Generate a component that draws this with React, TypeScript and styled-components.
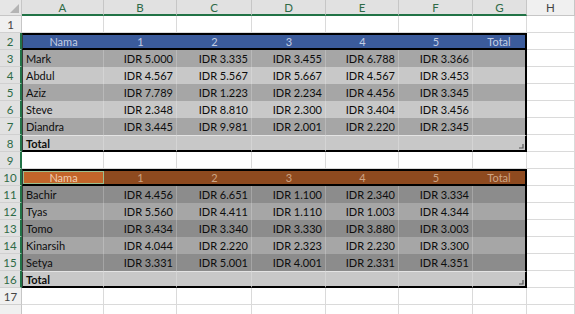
import React from 'react';
import styled, { createGlobalStyle, css } from 'styled-components';

const GlobalStyle = createGlobalStyle`
  html, body {
    margin: 0;
    padding: 0;
    background: #ffffff;
    overflow: hidden;
  }
  body {
    font-family: Lato, "Open Sans", "Liberation Sans", sans-serif;
  }
`;

const COLS = ['A', 'B', 'C', 'D', 'E', 'F', 'G', 'H'];
const ROW_COUNT = 18;
const LAST_LABELLED = 17;

const Sheet = styled.div`
  width: 575px;
  height: 314px;
  overflow: hidden;
  display: grid;
  grid-template-columns: 22px 82px 73px 75px 74px 73px 74px 54px 1fr;
  grid-template-rows: 16px repeat(${ROW_COUNT}, 17px);
  font-size: 11px;
  color: #0d0d0d;
`;

const Corner = styled.div`
  position: relative;
  background: #e6e6e6;
  border-right: 1px solid #c6c6c6;
  border-bottom: 1px solid #c6c6c6;
  box-sizing: border-box;
  &::after {
    content: '';
    position: absolute;
    right: 2px;
    bottom: 2px;
    border-left: 9px solid transparent;
    border-bottom: 9px solid #b4b4b4;
  }
`;

const ColHeader = styled.div<{ $selected?: boolean }>`
  box-sizing: border-box;
  display: flex;
  align-items: center;
  justify-content: center;
  background: ${p => (p.$selected ? '#e1e1e1' : '#f0f0f0')};
  color: ${p => (p.$selected ? '#2d6a46' : '#444')};
  border-right: 1px solid #c6c6c6;
  border-bottom: ${p => (p.$selected ? '2px solid #217346' : '1px solid #c6c6c6')};
  font-size: 11.5px;
`;

const RowHeader = styled.div<{ $selected?: boolean }>`
  box-sizing: border-box;
  display: flex;
  align-items: center;
  justify-content: center;
  background: ${p => (p.$selected ? '#e1e1e1' : '#f0f0f0')};
  color: ${p => (p.$selected ? '#2d6a46' : '#444')};
  border-bottom: 1px solid #d0d0d0;
  border-right: ${p => (p.$selected ? '2px solid #217346' : '1px solid #c6c6c6')};
  font-size: 11.5px;
`;

const Blank = styled.div`
  box-sizing: border-box;
  border-right: 1px solid #dadada;
  border-bottom: 1px solid #dadada;
`;

type Kind = 'head' | 'dark' | 'light' | 'total';
type Tone = 'blue' | 'brown';

const palette = {
  blue: { head: '#3b5b9b', headText: '#c4cee3', dark: '#a6a6a6', light: '#c8c8c8', total: '#c8c8c8' },
  brown: { head: '#8e4a1f', headText: '#cfa585', dark: '#8c8c8c', light: '#a6a6a6', total: '#c8c8c8' },
};

const TableCell = styled.div<{
  $kind: Kind;
  $tone: Tone;
  $align: 'left' | 'center' | 'right';
  $first?: boolean;
  $last?: boolean;
  $active?: boolean;
}>`
  position: relative;
  box-sizing: border-box;
  display: flex;
  align-items: center;
  padding: 0 3px;
  white-space: nowrap;
  overflow: hidden;
  justify-content: ${p => (p.$align === 'left' ? 'flex-start' : p.$align === 'right' ? 'flex-end' : 'center')};
  background: ${p => palette[p.$tone][p.$kind]};
  border-right: ${p => (p.$last ? '2px solid #000' : p.$kind === 'head' ? 'none' : '1px solid rgba(255,255,255,0.22)')};
  border-left: ${p => (p.$first ? '1px solid #3a3a3a' : 'none')};
  ${p =>
    p.$kind === 'head' &&
    css`
      color: ${palette[p.$tone].headText};
      border-top: 2px solid #000;
      border-bottom: 2px solid #000;
    `}
  ${p =>
    p.$kind === 'total' &&
    css`
      font-weight: 700;
      border-top: 1px solid #e4e4e4;
      border-bottom: 2px solid #000;
    `}
  ${p =>
    p.$active &&
    css`
      background: #c2652a;
      color: #f1cdb2;
      box-shadow: inset 0 0 0 1px #9bbf8e;
    `}
`;

const ResizeMark = styled.svg`
  position: absolute;
  right: 1px;
  bottom: 1px;
`;

const header = ['Nama', '1', '2', '3', '4', '5', 'Total'];

const table1 = [
  ['Mark', 'IDR 5.000', 'IDR 3.335', 'IDR 3.455', 'IDR 6.788', 'IDR 3.366'],
  ['Abdul', 'IDR 4.567', 'IDR 5.567', 'IDR 5.667', 'IDR 4.567', 'IDR 3.453'],
  ['Aziz', 'IDR 7.789', 'IDR 1.223', 'IDR 2.234', 'IDR 4.456', 'IDR 3.345'],
  ['Steve', 'IDR 2.348', 'IDR 8.810', 'IDR 2.300', 'IDR 3.404', 'IDR 3.456'],
  ['Diandra', 'IDR 3.445', 'IDR 9.981', 'IDR 2.001', 'IDR 2.220', 'IDR 2.345'],
];

const table2 = [
  ['Bachir', 'IDR 4.456', 'IDR 6.651', 'IDR 1.100', 'IDR 2.340', 'IDR 3.334'],
  ['Tyas', 'IDR 5.560', 'IDR 4.411', 'IDR 1.110', 'IDR 1.003', 'IDR 4.344'],
  ['Tomo', 'IDR 3.434', 'IDR 3.340', 'IDR 3.330', 'IDR 3.880', 'IDR 3.003'],
  ['Kinarsih', 'IDR 4.044', 'IDR 2.220', 'IDR 2.323', 'IDR 2.230', 'IDR 3.300'],
  ['Setya', 'IDR 3.331', 'IDR 5.001', 'IDR 4.001', 'IDR 2.331', 'IDR 4.351'],
];

interface TableDef {
  start: number;
  tone: Tone;
  rows: string[][];
  activeHead?: boolean;
}

const tables: TableDef[] = [
  { start: 2, tone: 'blue', rows: table1 },
  { start: 10, tone: 'brown', rows: table2, activeHead: true },
];

function renderTableRow(t: TableDef, r: number) {
  const offset = r - t.start;
  const totalRow = t.start + t.rows.length + 1;
  const cells: React.ReactNode[] = [];
  for (let c = 0; c < 7; c++) {
    const first = c === 0;
    const last = c === 6;
    let kind: Kind;
    let text = '';
    let align: 'left' | 'center' | 'right' = 'right';
    if (offset === 0) {
      kind = 'head';
      text = header[c];
      align = 'center';
    } else if (r === totalRow) {
      kind = 'total';
      text = first ? 'Total' : '';
      align = 'left';
    } else {
      kind = offset % 2 === 1 ? 'dark' : 'light';
      text = t.rows[offset - 1][c] ?? '';
      align = first ? 'left' : 'right';
    }
    cells.push(
      <TableCell
        key={c}
        $kind={kind}
        $tone={t.tone}
        $align={align}
        $first={first}
        $last={last}
        $active={t.activeHead && offset === 0 && first}
      >
        {text}
        {kind === 'total' && last && (
          <ResizeMark width="5" height="5" viewBox="0 0 5 5">
            <path d="M4 0 V4 H0" stroke="#555" strokeWidth="1.2" fill="none" />
          </ResizeMark>
        )}
      </TableCell>
    );
  }
  return cells;
}

export default function App() {
  const rows: React.ReactNode[] = [];
  for (let r = 1; r <= ROW_COUNT; r++) {
    const table = tables.find(t => r >= t.start && r <= t.start + t.rows.length + 1);
    const selected = r >= 2 && r <= 16;
    rows.push(
      <RowHeader key={`h${r}`} $selected={selected}>
        {r <= LAST_LABELLED ? r : ''}
      </RowHeader>
    );
    if (table) {
      rows.push(<React.Fragment key={`t${r}`}>{renderTableRow(table, r)}</React.Fragment>);
      rows.push(<Blank key={`b${r}`} />);
    } else {
      COLS.forEach(c => rows.push(<Blank key={`${c}${r}`} />));
    }
  }

  return (
    <>
      <GlobalStyle />
      <Sheet>
        <Corner />
        {COLS.map(c => (
          <ColHeader key={c} $selected={c !== 'H'}>
            {c}
          </ColHeader>
        ))}
        {rows}
      </Sheet>
    </>
  );
}
